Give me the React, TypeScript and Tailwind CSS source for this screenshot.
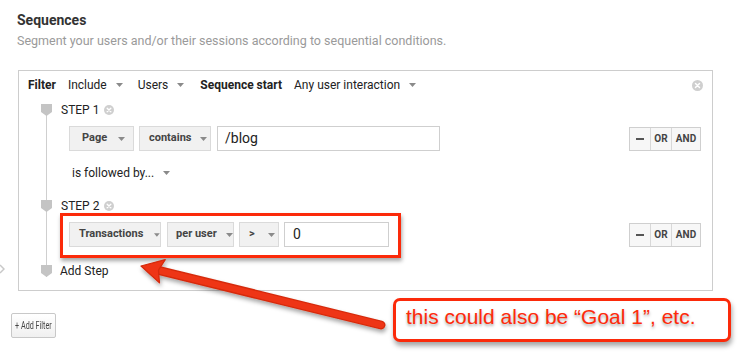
import React from "react";

function Caret({ className = "" }: { className?: string }) {
  return (
    <svg width="7" height="4" viewBox="0 0 7 4" className={className}>
      <polygon points="0,0 7,0 3.5,4" fill="#8a8a8a" />
    </svg>
  );
}

function CloseDot({ size = 11 }: { size?: number }) {
  return (
    <svg width={size} height={size} viewBox="0 0 12 12">
      <circle cx="6" cy="6" r="6" fill="#cfcfcf" />
      <path d="M3.8 3.8 L8.2 8.2 M8.2 3.8 L3.8 8.2" stroke="#fff" strokeWidth="1.6" strokeLinecap="round" />
    </svg>
  );
}

function Marker() {
  return (
    <svg width="11" height="12" viewBox="0 0 11 12">
      <polygon points="0,0 11,0 11,8 5.5,12 0,8" fill="#c4c4c4" />
    </svg>
  );
}

function Select({ label, w, pl, caretGap }: { label: string; w: string; pl: string; caretGap: string }) {
  return (
    <div className={`flex h-full items-center border border-[#dadada] bg-[#f1f1f1] text-[11px] font-bold text-[#444] ${w} ${pl}`}>
      <span>{label}</span>
      <Caret className={caretGap} />
    </div>
  );
}

function OrAnd() {
  return (
    <div className="flex h-[24px] border border-[#cfcfcf] bg-[#f7f7f7] text-[10px] font-bold text-[#444]">
      <div className="flex w-[21px] items-center justify-center border-r border-[#d8d8d8]">
        <div className="h-[2px] w-[8px] bg-[#555]" />
      </div>
      <div className="flex w-[21px] items-center justify-center border-r border-[#d8d8d8]">OR</div>
      <div className="flex w-[28px] items-center justify-center">AND</div>
    </div>
  );
}

function Arrow() {
  const tip = [141, 266];
  const tail = [381, 325];
  const dx = tail[0] - tip[0];
  const dy = tail[1] - tip[1];
  const len = Math.hypot(dx, dy);
  const u = [dx / len, dy / len];
  const n = [-u[1], u[0]];
  const hl = 22;
  const hw = 12;
  const base = [tip[0] + hl * u[0], tip[1] + hl * u[1]];
  const notch = [tip[0] + (hl - 4) * u[0], tip[1] + (hl - 4) * u[1]];
  const c1 = [base[0] + hw * n[0], base[1] + hw * n[1]];
  const c2 = [base[0] - hw * n[0], base[1] - hw * n[1]];
  const pts = [tip, c1, notch, c2].map((p) => p.join(",")).join(" ");
  return (
    <svg width="756" height="356" viewBox="0 0 756 356" className="pointer-events-none absolute left-0 top-0">
      <defs>
        <filter id="sh" x="-10%" y="-30%" width="130%" height="180%">
          <feDropShadow dx="1" dy="3" stdDeviation="2" floodColor="#000" floodOpacity="0.35" />
        </filter>
      </defs>
      <g filter="url(#sh)">
        <line x1={notch[0]} y1={notch[1]} x2={tail[0]} y2={tail[1]} stroke="#d42a0c" strokeWidth="9" strokeLinecap="round" />
        <line x1={notch[0]} y1={notch[1]} x2={tail[0]} y2={tail[1]} stroke="#ee3413" strokeWidth="6.5" strokeLinecap="round" />
        <polygon points={pts} fill="#ee3413" stroke="#d42a0c" strokeWidth="1.2" strokeLinejoin="round" />
      </g>
    </svg>
  );
}

export default function App() {
  return (
    <div className="relative h-[356px] w-[756px] overflow-hidden bg-white font-['Roboto',sans-serif] text-[#222]">
      <div className="pl-[17px] pt-[11px]">
        <div className="text-[14px] font-bold leading-[18px] text-[#333]">Sequences</div>
        <div className="mt-[4px] text-[12.5px] leading-[16px] text-[#9a9a9a]">
          Segment your users and/or their sessions according to sequential conditions.
        </div>
      </div>

      <div className="ml-[18px] mt-[21px] h-[221px] w-[695px] border border-[#cdcdcd]">
        {/* Filter row */}
        <div className="flex h-[28px] items-center pl-[9px] pr-[9px] text-[12px]">
          <span className="font-bold">Filter</span>
          <span className="ml-[12px]">Include</span>
          <Caret className="ml-[9px]" />
          <span className="ml-[15px]">Users</span>
          <Caret className="ml-[9px]" />
          <span className="ml-[16px] font-bold">Sequence start</span>
          <span className="ml-[12px]">Any user interaction</span>
          <Caret className="ml-[9px]" />
          <div className="ml-auto">
            <CloseDot size={11} />
          </div>
        </div>

        <div className="relative">
          <div className="absolute left-[27px] top-[8px] h-[168px] w-px bg-[#cfcfcf]" />

          {/* STEP 1 */}
          <div className="mt-[2px] flex h-[18px] items-center">
            <div className="relative w-[42px] pl-[22px]">
              <Marker />
            </div>
            <span className="text-[12px]">STEP 1</span>
            <div className="ml-[5px] flex">
              <CloseDot size={10} />
            </div>
          </div>

          <div className="mt-[7px] flex h-[25px] items-center pl-[50px] pr-[11px]">
            <Select label="Page" w="w-[65px]" pl="pl-[12px]" caretGap="ml-[11px]" />
            <div className="ml-[5px] h-full">
              <Select label="contains" w="w-[72px]" pl="pl-[9px]" caretGap="ml-[9px]" />
            </div>
            <div className="ml-[6px] flex h-full w-[223px] items-center border border-[#cfcfcf] pl-[7px] text-[14px]">/blog</div>
            <div className="ml-auto">
              <OrAnd />
            </div>
          </div>

          <div className="mt-[13px] flex h-[18px] items-center pl-[53px] text-[12px]">
            <span>is followed by...</span>
            <Caret className="ml-[9px]" />
          </div>

          {/* STEP 2 */}
          <div className="mt-[15px] flex h-[18px] items-center">
            <div className="relative w-[42px] pl-[22px]">
              <Marker />
            </div>
            <span className="text-[12px]">STEP 2</span>
            <div className="ml-[5px] flex">
              <CloseDot size={10} />
            </div>
          </div>

          <div className="mt-[7px] flex h-[25px] items-center pl-[50px] pr-[11px]">
            <Select label="Transactions" w="w-[92px]" pl="pl-[9px]" caretGap="ml-[11px]" />
            <div className="ml-[6px] h-full">
              <Select label="per user" w="w-[67px]" pl="pl-[8px]" caretGap="ml-[9px]" />
            </div>
            <div className="ml-[5px] h-full">
              <Select label=">" w="w-[40px]" pl="pl-[9px]" caretGap="ml-[13px]" />
            </div>
            <div className="ml-[5px] flex h-full w-[105px] items-center border border-[#cfcfcf] pl-[8px] text-[14px]">0</div>
            <div className="ml-auto">
              <OrAnd />
            </div>
          </div>

          {/* Add Step */}
          <div className="mt-[15px] flex h-[18px] items-center">
            <div className="relative w-[41px] pl-[22px]">
              <Marker />
            </div>
            <span className="text-[12px]">Add Step</span>
          </div>
        </div>
      </div>

      <div className="ml-[11px] mt-[22px] flex h-[25px] w-[45px] items-center justify-center overflow-hidden rounded-[2px] border border-[#c8c8c8] bg-gradient-to-b from-white to-[#f0f0f0] text-[10px] text-[#444]">
        <span className="inline-block scale-x-[0.72] whitespace-nowrap">+ Add Filter</span>
      </div>

      {/* left edge chevron */}
      <svg width="5" height="10" viewBox="0 0 5 10" className="absolute left-0 top-[264px]">
        <path d="M0 1 L4 5 L0 9" fill="none" stroke="#c8c8c8" strokeWidth="1.5" />
      </svg>

      {/* highlight */}
      <div className="absolute left-[60px] top-[213px] h-[45px] w-[341px] border-[3px] border-[#fb2a0a] shadow-[1px_3px_4px_rgba(0,0,0,0.35)]" />

      <Arrow />

      {/* callout */}
      <div className="absolute left-[393px] top-[298px] flex h-[44px] w-[338px] items-start rounded-[7px] border-[3px] border-[#fb2a0a] bg-white pl-[10px] pt-[3px] shadow-[1px_4px_5px_rgba(0,0,0,0.35)]">
        <span className="whitespace-nowrap font-['Liberation_Sans',Arial,sans-serif] text-[21px] leading-[26px] text-[#ff2a0a] [text-shadow:0_2px_3px_rgba(0,0,0,0.35)]">
          this could also be “Goal 1”, etc.
        </span>
      </div>
    </div>
  );
}
